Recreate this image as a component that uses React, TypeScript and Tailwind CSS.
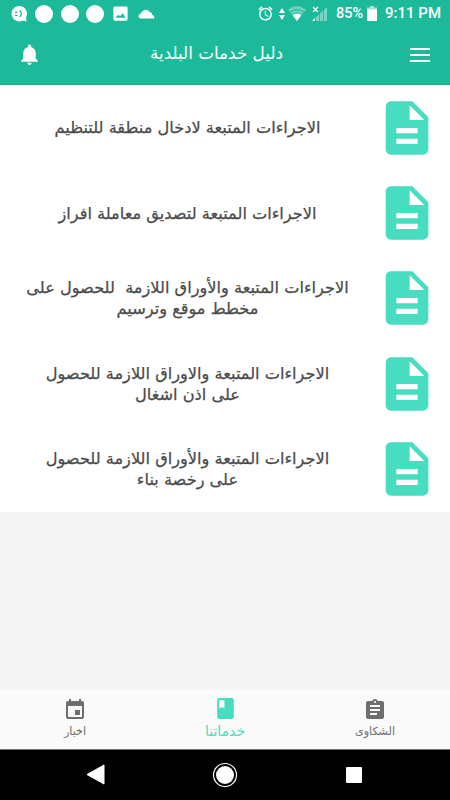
import type { ReactNode } from "react";

const services = [
  ["الاجراءات المتبعة لادخال منطقة للتنظيم"],
  ["الاجراءات المتبعة لتصديق معاملة افراز"],
  ["الاجراءات المتبعة والأوراق اللازمة\u00a0 للحصول على", "مخطط موقع وترسيم"],
  ["الاجراءات المتبعة والاوراق اللازمة للحصول", "على اذن اشغال"],
  ["الاجراءات المتبعة والأوراق اللازمة للحصول", "على رخصة بناء"],
];

function Icon({ d, className }: { d: string; className?: string }) {
  return (
    <svg viewBox="0 0 24 24" fill="currentColor" className={className}>
      <path d={d} />
    </svg>
  );
}

const paths = {
  bell: "M12 22c1.1 0 2-.9 2-2h-4c0 1.1.89 2 2 2zm6-6v-5c0-3.07-1.64-5.64-4.5-6.32V4c0-.83-.67-1.5-1.5-1.5s-1.5.67-1.5 1.5v.68C7.63 5.36 6 7.92 6 11v5l-2 2v1h16v-1l-2-2z",
  document: "M14 2H6c-1.1 0-1.99.9-1.99 2L4 20c0 1.1.89 2 1.99 2H18c1.1 0 2-.9 2-2V8l-6-6zm2 16H8v-2h8v2zm0-4H8v-2h8v2zm-3-5V3.5L18.5 9H13z",
  image: "M21 19V5c0-1.1-.9-2-2-2H5c-1.1 0-2 .9-2 2v14c0 1.1.9 2 2 2h14c1.1 0 2-.9 2-2zM6 17.5l3-4 2.5 2 3.5-4 3 6H6z",
  event: "M17 12h-5v5h5v-5zM16 1v2H8V1H6v2H5c-1.11 0-1.99.9-1.99 2L3 19c0 1.1.89 2 2 2h14c1.1 0 2-.9 2-2V5c0-1.1-.9-2-2-2h-1V1h-2zm3 18H5V8h14v11z",
  book: "M18 2H6c-1.1 0-2 .9-2 2v16c0 1.1.9 2 2 2h12c1.1 0 2-.9 2-2V4c0-1.1-.9-2-2-2zM6 4h5v8l-2.5-1.5L6 12V4z",
  clipboard: "M19 3h-4.18C14.4 1.84 13.3 1 12 1c-1.3 0-2.4.84-2.82 2H5c-1.1 0-2 .9-2 2v14c0 1.1.9 2 2 2h14c1.1 0 2-.9 2-2V5c0-1.1-.9-2-2-2zm-7 0c.55 0 1 .45 1 1s-.45 1-1 1-1-.45-1-1 .45-1 1-1zm2 14H7v-2h7v2zm3-4H7v-2h10v2zm0-4H7V7h10v2z",
  alarm: "M22 5.72l-4.6-3.86-1.29 1.53 4.6 3.86L22 5.72zM7.88 3.39L6.6 1.86 2 5.71l1.29 1.53 4.59-3.85zM12.5 8H11v6l4.75 2.85.75-1.23-4-2.37V8zM12 4c-4.97 0-9 4.03-9 9s4.02 9 9 9c4.97 0 9-4.03 9-9s-4.03-9-9-9zm0 16c-3.87 0-7-3.13-7-7s3.13-7 7-7 7 3.13 7 7-3.13 7-7 7z",
};

function StatusBar() {
  return (
    <div dir="ltr" className="flex h-[27px] items-center justify-between pl-[11px] pr-[9px] text-white">
      <div className="flex items-center">
        <svg viewBox="0 0 16 16" className="size-4">
          <path d="M8 0a7.7 7.7 0 1 0 4 14.4l3.500 1-.5-4A7.700 7.700 0 0 0 8 0z" fill="white" />
          <path d="M4 6.300h2.500M4 9.300h2.500M8.800 4.500q3 3.400 0 6.600" stroke="#1cba9b" strokeWidth="1.300" fill="none" />
        </svg>
        <div className="ml-2 size-[18px] rounded-full bg-white" />
        <div className="ml-[7.5px] size-[18px] rounded-full bg-white" />
        <div className="ml-[7.5px] size-[18px] rounded-full bg-white" />
        <Icon d={paths.image} className="ml-[7px] size-[19px]" />
        <svg viewBox="0 0 17 10" className="ml-[8px] h-[10px] w-[17px]" fill="white">
          <path d="M3 9.500a2.400 2.400 0 0 1-.3-4.800A3 3 0 0 1 4.500 2.500 4 4 0 0 1 11.500 3a2.500 2.500 0 0 1 2.500 2.500q2.500 .8 2.500 4z" />
        </svg>
      </div>
      <div className="flex items-center">
        <Icon d={paths.alarm} className="size-[17px]" />
        <svg viewBox="0 0 6 12" className="ml-[5px] h-3 w-[6px]" fill="white">
          <path d="M3 0l3 5H0zM3 12l3-5H0z" />
        </svg>
        <svg viewBox="0 0 18 15" className="ml-[3px] h-[15px] w-[18px]" fill="white">
          <path d="M0 3.500q9-7 18 0L9 15z" opacity=".35" />
          <path d="M4.500 9q4.500-3.500 9 0L9 15z" />
          <path d="M2 6.200q7-5 14 0M4 9q5-4 10 0" stroke="#1cba9b" fill="none" />
        </svg>
        <svg viewBox="0 0 15 15" className="ml-[6px] h-[15px] w-[15px]">
          <path d="M0 15L15 1v14z" fill="white" opacity=".4" />
          <path d="M0 15l3-3v3z" fill="white" />
          <path d="M3.500 6v9M7.500 5v10M11.500 2v13" stroke="#1cba9b" strokeWidth=".8" />
          <path d="M1 1l5 5M6 1L1 6" stroke="white" strokeWidth="1.200" />
        </svg>
        <span className="ml-[9px] w-[28px] font-[Roboto] text-[14.5px] font-medium">85%</span>
        <svg viewBox="0 0 10 15" className="ml-[3px] h-[15px] w-[10px]" fill="white">
          <path d="M3 0h4v1.500h3V15H0V1.500h3z" opacity=".6" />
          <path d="M0 3.500h10V15H0z" />
        </svg>
        <span className="ml-2 font-[Roboto] text-[15px] font-medium">9:11 PM</span>
      </div>
    </div>
  );
}

function Tab({ icon, label, active }: { icon: ReactNode; label: string; active?: boolean }) {
  return (
    <div className={active ? "flex flex-1 flex-col items-center pt-[7px] text-[#48dcc0]" : "flex flex-1 flex-col items-center pt-[9px] text-[#6e6e6e]"}>
      {icon}
      <span className={active ? "text-[14px] leading-[20px]" : "text-[11.2px] leading-[20px]"}>{label}</span>
    </div>
  );
}

export default function App() {
  return (
    <div dir="rtl" className="flex h-[800px] w-[450px] flex-col bg-[#f5f5f5] font-['DejaVu_Sans',sans-serif]">
      <header className="h-[85px] border-b border-[#18a98d] bg-[#1cba9b]">
        <StatusBar />
        <div className="flex h-[55px] items-center pl-[17px] pr-5 text-white">
          <div className="flex w-5 flex-col gap-[4px]">
            <div className="h-[2px] bg-white" />
            <div className="h-[2px] bg-white" />
            <div className="h-[2px] bg-white" />
          </div>
          <h1 className="flex-1 pb-[2px] pr-[19px] text-center text-[16.8px]">دليل خدمات البلدية</h1>
          <Icon d={paths.bell} className="size-[25px]" />
        </div>
      </header>

      <main className="flex-1">
        <ul className="h-[427px] bg-white">
          {services.map((lines, i) => (
            <li key={i} className="flex h-[85.4px] items-center pr-[11px]">
              <Icon d={paths.document} className="size-16 shrink-0 text-[#48dcc0]" />
              <div className="flex-1 text-center text-[16.2px] leading-[21px] text-[#4a4a4a] [-webkit-text-stroke:0.25px_#4a4a4a]">
                {lines.map((line) => (
                  <p key={line} className="whitespace-nowrap">{line}</p>
                ))}
              </div>
            </li>
          ))}
        </ul>
      </main>

      <nav className="flex h-[60px] bg-[#fafafa]">
        <Tab icon={<Icon d={paths.clipboard} className="size-6" />} label="الشكاوى" />
        <Tab icon={<Icon d={paths.book} className="size-[25px]" />} label="خدماتنا" active />
        <Tab icon={<Icon d={paths.event} className="size-6" />} label="اخبار" />
      </nav>

      <footer dir="ltr" className="flex h-[51px] items-center justify-between border-t border-[#777] bg-black pl-[86px] pr-[88px]">
        <svg viewBox="0 0 19 22" className="h-[22px] w-[19px]" fill="white">
          <path d="M18 1v19L1 10.500z" stroke="white" strokeLinejoin="round" />
        </svg>
        <svg viewBox="0 0 26 26" className="mr-[2px] size-[26px]" fill="white">
          <circle cx="13" cy="13" r="9" />
          <circle cx="13" cy="13" r="11.500" fill="none" stroke="white" strokeWidth="1.200" />
        </svg>
        <div className="size-4 rounded-[1px] bg-white" />
      </footer>
    </div>
  );
}
